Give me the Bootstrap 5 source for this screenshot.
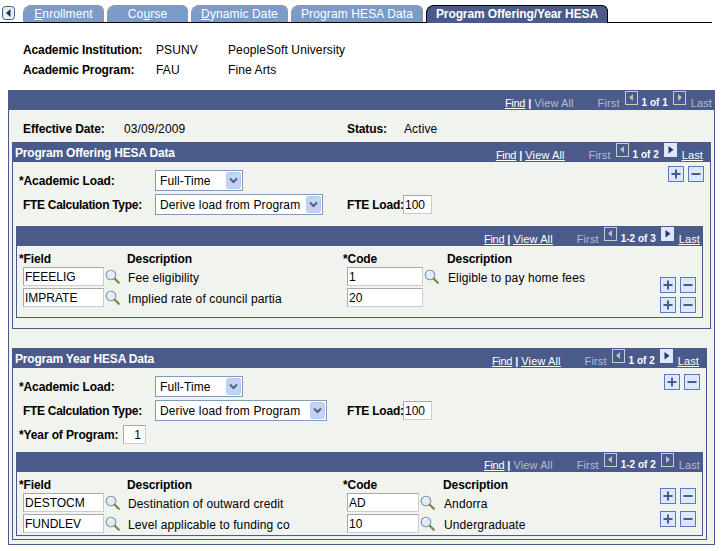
<!DOCTYPE html>
<html lang="en">
<head>
<meta charset="utf-8">
<title>Program Offering/Year HESA</title>
<link rel="stylesheet" href="https://cdn.jsdelivr.net/npm/bootstrap@5.3.0/dist/css/bootstrap.min.css">
<style>
html,body{background:#fff;color:#000;font:12px/14px "Liberation Sans",Arial,sans-serif;margin:0}
body{width:721px;height:551px;overflow:hidden;letter-spacing:.12px}
.tabbar{height:23px;padding-top:5px;width:712px;border-bottom:1px solid #000;gap:3px;align-items:flex-end}
.tab-scroll{width:13px;height:14px;margin:0 5px 2px 2px;display:block}
.psx-tab{height:17px;background:#7b9cc8;color:#fff;border:1px solid #8c9aa8;border-bottom:0;border-radius:8px 6px 0 0;text-align:center;line-height:16px;font-size:12px;padding:0}
.psx-tab.on{background:#4a5a8a;border-color:#000;font-weight:700;margin-bottom:-1px;height:18px;letter-spacing:-.1px}
.psx-tab u{text-underline-offset:1px}
.key-block{padding:17px 0 0 23px;height:67px}
.key-row{height:20px;align-items:center}
.lbl{font-weight:700;white-space:nowrap;letter-spacing:-.12px}
.w-133{width:133px}.w-72{width:72px}
.outer{margin:0 6px 0 8px;height:455px;width:707px;background:#f1f3ee;border:1px solid #4a5a8a;border-radius:0;display:block}
.bar{height:20px;background:#4a5a8a;color:#fff;font-size:11px;line-height:14px;margin:0;border:0;border-radius:0;padding:0}
.outer>.bar{margin:-1px -1px 0;padding-right:3px}
.bar-title{font-size:12px;font-weight:700;padding-left:3px;margin-top:2px;letter-spacing:-.2px}
.nav-links{margin-left:auto;display:flex;align-items:center;white-space:nowrap;height:20px}
.nav-links a{color:#fff;margin-top:6px}
.nav-links .fnd{letter-spacing:-.3px}
.nav-links .off{color:#b5bcd0;margin-top:6px}
.nav-links .cnt{font-size:10px;font-weight:700;margin:6px 5px 0 4px;letter-spacing:0}
.nav-links .sep{margin:6px 3px 0 3px;font-weight:700}
.nav-links .sp{width:24px}
.nav-links svg{display:block;margin-top:-4px}
.nav-links .gap5{margin-left:5px}
.eff-row{height:32px;padding:6px 0 0 14px;align-items:center}
.w-101{width:101px}.w-223{width:223px}.w-57{width:57px}
.psx-panel{border:1px solid #4a5a8a;background:#f1f3ee;border-radius:0;position:relative;display:block}
.p1{margin:0 3px 0 3px;height:187px;width:699px}
.p2{margin:19px 7px 0 3px;height:192px;width:695px}
.psx-panel>.bar{margin:-1px -1px 0;padding-right:8px}
.form-area{padding:8px 0 0 6px}
.frow{align-items:center;height:21px;margin-bottom:3px}
.flab{width:136px;font-weight:700;white-space:nowrap;letter-spacing:-.12px}
.flab.ind{padding-left:4px;letter-spacing:-.3px}
.ylab{width:104px;font-weight:700;white-space:nowrap;letter-spacing:-.12px}
.fsel{height:21px;background:#fff;border:1px solid #7f9db9;display:flex;align-items:center;justify-content:space-between;padding:0 1px 0 4px}
.arrow{width:15px;height:17px;display:block}
.w-88{width:88px}.w-168{width:168px}.w-172{width:172px}
.fte{font-weight:700;margin-left:24px;width:56px;white-space:nowrap;letter-spacing:-.2px}
.fte2{margin-left:20px}
.psx-in{display:block;height:19px;border:1px solid #a9a9a9;border-right-color:#ccc;border-bottom-color:#ccc;background:#fff;font:12px "Liberation Sans",Arial,sans-serif;color:#000;padding:0 1px;border-radius:0;outline:0}
.tr{text-align:right;padding-right:4px}
.pm-top{position:absolute;top:23px;right:6px;display:flex;gap:4px}
.p2 .pm-top{top:25px}
.pm{display:block;width:16px;height:16px}
.grid{border:1px solid #4a5a8a;margin:0 0 0 3px;width:687px;border-radius:0;display:block;position:relative}
.grid>.bar{margin:-1px -1px 0;padding-right:3px}
.gh{height:21px;padding-top:4px;font-weight:700;align-items:center;letter-spacing:-.1px}
.grow{height:19px;margin-bottom:2px;align-items:center;padding-left:6px}
.w-81{width:81px}.w-76{width:76px}.w-72i{width:72px}
.lk{width:15px;height:15px;margin-left:1px;display:block;flex:none}
.d1{width:227px;padding:2px 0 0 8px;white-space:nowrap}
.d2{padding:2px 0 0 9px;white-space:nowrap}
.gc1{width:110px;padding-left:2px}
.gc2{width:216px}
.gc3{width:104px}
.gc3n{width:100px}
.pm-rows{position:absolute;right:6px;display:flex;flex-direction:column;gap:4px;top:50px}
.pm-rows.wide{top:35px;gap:7px}
.pm-rows>div{display:flex;gap:4px}
.h-92{height:92px;margin-top:11px}
.h-84{height:84px;margin-top:7px}
.defs-host{position:absolute;width:0;height:0}
.w-t81{width:81px}.w-t97{width:97px}.w-t132{width:132px}.w-t182{width:182px}
.w-i29{width:29px}.w-i23{width:23px}
</style>
</head>
<body>
<svg class="defs-host" aria-hidden="true">
<defs>
<symbol id="lens" viewBox="0 0 15 15">
<circle cx="6" cy="6" r="4.8" fill="#dfecfa" stroke="#7f93a3" stroke-width="1.1"/>
<path d="M3.5 5a3 3 0 0 1 3-2.5" fill="none" stroke="#fff" stroke-width="1.2"/>
<path d="M9.8 9.8l4 4" stroke="#85833f" stroke-width="2.2" stroke-linecap="round"/>
</symbol>
<symbol id="plus" viewBox="0 0 16 16">
<rect x=".5" y=".5" width="15" height="15" fill="#dce8fb" stroke="#5f76c4"/>
<path d="M3.5 8h9M8 3.5v9" stroke="#4a5a8a" stroke-width="2"/>
</symbol>
<symbol id="minus" viewBox="0 0 16 16">
<rect x=".5" y=".5" width="15" height="15" fill="#dce8fb" stroke="#5f76c4"/>
<path d="M3.5 8h9" stroke="#4a5a8a" stroke-width="2"/>
</symbol>
<symbol id="prevoff" viewBox="0 0 13 14">
<rect x=".5" y=".5" width="12" height="13" fill="#4a5a8a" stroke="#c6cad2"/>
<path d="M8 3v7L4 6.5z" fill="#b9bec8"/>
</symbol>
<symbol id="nextoff" viewBox="0 0 13 14">
<rect x=".5" y=".5" width="12" height="13" fill="#4a5a8a" stroke="#c6cad2"/>
<path d="M5 3v7l4-3.5z" fill="#b9bec8"/>
</symbol>
<symbol id="nexton" viewBox="0 0 13 14">
<rect x="0" y="0" width="13" height="14" fill="#dfe8fa"/>
<path d="M4.5 3v7.5L9.5 6.7z" fill="#25336a"/>
</symbol>
<symbol id="arr" viewBox="0 0 15 17">
<rect x=".5" y=".5" width="14" height="16" rx="2" fill="#c3d3f3" stroke="#b8cbee"/>
<path d="M4 6.5l3.5 3.5L11 6.5" fill="none" stroke="#4d6185" stroke-width="2"/>
</symbol>
</defs>
</svg>

<nav class="nav tabbar flex-nowrap">
<svg class="tab-scroll" viewBox="0 0 13 14"><rect x=".5" y=".5" width="12" height="13" rx="3" fill="#e8eef8" stroke="#3f5c86"/><path d="M8.5 3v8L4 7z" fill="#1d3358"/></svg>
<div class="psx-tab w-t81"><u>E</u>nrollment</div>
<div class="psx-tab w-t81">Co<u>u</u>rse</div>
<div class="psx-tab w-t97"><u>D</u>ynamic Date</div>
<div class="psx-tab w-t132">Program HESA Data</div>
<div class="psx-tab on w-t182">Program Offering/Year HESA</div>
</nav>

<div class="key-block">
<div class="d-flex key-row"><span class="lbl w-133">Academic Institution:</span><span class="w-72">PSUNV</span><span>PeopleSoft University</span></div>
<div class="d-flex key-row"><span class="lbl w-133">Academic Program:</span><span class="w-72">FAU</span><span>Fine Arts</span></div>
</div>

<section class="outer">
<div class="bar d-flex">
<div class="nav-links"><a class="fnd" href="#"><u>Find</u></a><span class="sep">|</span><span class="off">View All</span><span class="sp"></span><span class="off">First</span><svg class="gap5" width="13" height="14"><use href="#prevoff"/></svg><span class="cnt">1 of 1</span><svg width="13" height="14"><use href="#nextoff"/></svg><span class="off gap5">Last</span></div>
</div>
<div class="d-flex eff-row"><span class="lbl w-101">Effective Date:</span><span class="w-223">03/09/2009</span><span class="lbl w-57">Status:</span><span>Active</span></div>

<div class="psx-panel p1">
<div class="bar d-flex align-items-center"><span class="bar-title">Program Offering HESA Data</span>
<div class="nav-links"><a class="fnd" href="#"><u>Find</u></a><span class="sep">|</span><a href="#"><u>View All</u></a><span class="sp"></span><span class="off">First</span><svg class="gap5" width="13" height="14"><use href="#prevoff"/></svg><span class="cnt">1 of 2</span><svg width="13" height="14"><use href="#nexton"/></svg><a class="gap5" href="#"><u>Last</u></a></div>
</div>
<div class="pm-top"><svg class="pm"><use href="#plus"/></svg><svg class="pm"><use href="#minus"/></svg></div>
<div class="form-area">
<div class="d-flex frow"><span class="flab">*Academic Load:</span><div class="fsel w-88"><span>Full-Time</span><svg class="arrow"><use href="#arr"/></svg></div></div>
<div class="d-flex frow"><span class="flab ind">FTE Calculation Type:</span><div class="fsel w-168"><span>Derive load from Program</span><svg class="arrow"><use href="#arr"/></svg></div><span class="fte">FTE Load:</span><input class="psx-in w-i29" value="100" aria-label="FTE Load"></div>
</div>
<div class="grid h-92">
<div class="bar d-flex"><div class="nav-links"><a class="fnd" href="#"><u>Find</u></a><span class="sep">|</span><a href="#"><u>View All</u></a><span class="sp"></span><span class="off">First</span><svg class="gap5" width="13" height="14"><use href="#prevoff"/></svg><span class="cnt">1-2 of 3</span><svg width="13" height="14"><use href="#nexton"/></svg><a class="gap5" href="#"><u>Last</u></a></div></div>
<div class="d-flex gh"><span class="gc1">*Field</span><span class="gc2">Description</span><span class="gc3">*Code</span><span>Description</span></div>
<div class="d-flex grow"><input class="psx-in w-81" value="FEEELIG" aria-label="Field"><svg class="lk"><use href="#lens"/></svg><span class="d1">Fee eligibility</span><input class="psx-in w-76" value="1" aria-label="Code"><svg class="lk"><use href="#lens"/></svg><span class="d2">Eligible to pay home fees</span></div>
<div class="d-flex grow"><input class="psx-in w-81" value="IMPRATE" aria-label="Field"><svg class="lk"><use href="#lens"/></svg><span class="d1">Implied rate of council partia</span><input class="psx-in w-76" value="20" aria-label="Code"></div>
<div class="pm-rows"><div><svg class="pm"><use href="#plus"/></svg><svg class="pm"><use href="#minus"/></svg></div><div><svg class="pm"><use href="#plus"/></svg><svg class="pm"><use href="#minus"/></svg></div></div>
</div>
</div>

<div class="psx-panel p2">
<div class="bar d-flex align-items-center"><span class="bar-title">Program Year HESA Data</span>
<div class="nav-links"><a class="fnd" href="#"><u>Find</u></a><span class="sep">|</span><a href="#"><u>View All</u></a><span class="sp"></span><span class="off">First</span><svg class="gap5" width="13" height="14"><use href="#prevoff"/></svg><span class="cnt">1 of 2</span><svg width="13" height="14"><use href="#nexton"/></svg><a class="gap5" href="#"><u>Last</u></a></div>
</div>
<div class="pm-top"><svg class="pm"><use href="#plus"/></svg><svg class="pm"><use href="#minus"/></svg></div>
<div class="form-area">
<div class="d-flex frow"><span class="flab">*Academic Load:</span><div class="fsel w-88"><span>Full-Time</span><svg class="arrow"><use href="#arr"/></svg></div></div>
<div class="d-flex frow"><span class="flab ind">FTE Calculation Type:</span><div class="fsel w-172"><span>Derive load from Program</span><svg class="arrow"><use href="#arr"/></svg></div><span class="fte fte2">FTE Load:</span><input class="psx-in w-i29" value="100" aria-label="FTE Load"></div>
<div class="d-flex frow"><span class="ylab">*Year of Program:</span><input class="psx-in tr w-i23" value="1" aria-label="Year of Program"></div>
</div>
<div class="grid h-84">
<div class="bar d-flex"><div class="nav-links"><a class="fnd" href="#"><u>Find</u></a><span class="sep">|</span><span class="off">View All</span><span class="sp"></span><span class="off">First</span><svg class="gap5" width="13" height="14"><use href="#prevoff"/></svg><span class="cnt">1-2 of 2</span><svg width="13" height="14"><use href="#nextoff"/></svg><span class="off gap5">Last</span></div></div>
<div class="d-flex gh"><span class="gc1">*Field</span><span class="gc2">Description</span><span class="gc3n">*Code</span><span>Description</span></div>
<div class="d-flex grow"><input class="psx-in w-81" value="DESTOCM" aria-label="Field"><svg class="lk"><use href="#lens"/></svg><span class="d1">Destination of outward credit</span><input class="psx-in w-72i" value="AD" aria-label="Code"><svg class="lk"><use href="#lens"/></svg><span class="d2">Andorra</span></div>
<div class="d-flex grow"><input class="psx-in w-81" value="FUNDLEV" aria-label="Field"><svg class="lk"><use href="#lens"/></svg><span class="d1">Level applicable to funding co</span><input class="psx-in w-72i" value="10" aria-label="Code"><svg class="lk"><use href="#lens"/></svg><span class="d2">Undergraduate</span></div>
<div class="pm-rows wide"><div><svg class="pm"><use href="#plus"/></svg><svg class="pm"><use href="#minus"/></svg></div><div><svg class="pm"><use href="#plus"/></svg><svg class="pm"><use href="#minus"/></svg></div></div>
</div>
</div>
</section>
<script src="https://cdn.jsdelivr.net/npm/bootstrap@5.3.0/dist/js/bootstrap.bundle.min.js"></script>
</body>
</html>
